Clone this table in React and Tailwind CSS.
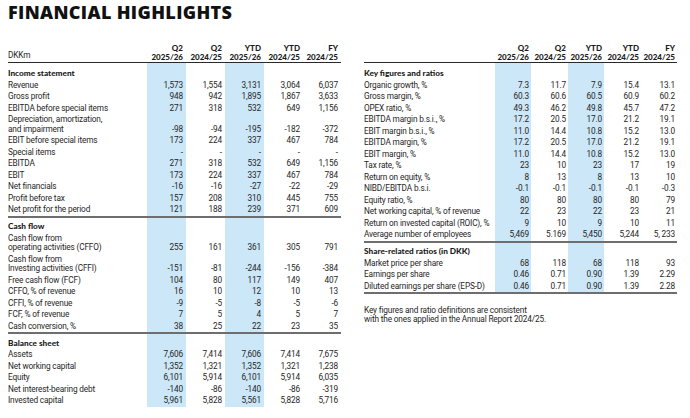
const heads = [["Q2", "2025/26"], ["Q2", "2024/25"], ["YTD", "2025/26"], ["YTD", "2024/25"], ["FY", "2024/25"]]

const leftCols = "grid grid-cols-[139px_39px_39px_39px_39px_38px]"
const rightCols = "grid grid-cols-[131px_36px_37px_36px_37px_36px]"

const leftSections = [
  {
    title: "Income statement",
    first: true,
    rows: [
      ["Revenue", ["1,573", "1,554", "3,131", "3,064", "6,037"]],
      ["Gross profit", ["948", "942", "1,895", "1,867", "3,633"]],
      ["EBITDA before special items", ["271", "318", "532", "649", "1,156"]],
      [["Depreciation, amortization,", "and impairment"], ["-98", "-94", "-195", "-182", "-372"]],
      ["EBIT before special items", ["173", "224", "337", "467", "784"]],
      ["Special items", ["-", "-", "-", "-", "-"]],
      ["EBITDA", ["271", "318", "532", "649", "1,156"]],
      ["EBIT", ["173", "224", "337", "467", "784"]],
      ["Net financials", ["-16", "-16", "-27", "-22", "-29"]],
      ["Profit before tax", ["157", "208", "310", "445", "755"]],
      ["Net profit for the period", ["121", "188", "239", "371", "609"]],
    ],
    line: true,
  },
  {
    title: "Cash flow",
    rows: [
      [["Cash flow from", "operating activities (CFFO)"], ["255", "161", "361", "305", "791"]],
      [["Cash flow from", "Investing activities (CFFI)"], ["-151", "-81", "-244", "-156", "-384"]],
      ["Free cash flow (FCF)", ["104", "80", "117", "149", "407"]],
      ["CFFO, % of revenue", ["16", "10", "12", "10", "13"]],
      ["CFFI, % of revenue", ["-9", "-5", "-8", "-5", "-6"]],
      ["FCF, % of revenue", ["7", "5", "4", "5", "7"]],
      ["Cash conversion, %", ["38", "25", "22", "23", "35"]],
    ],
    line: true,
  },
  {
    title: "Balance sheet",
    rows: [
      ["Assets", ["7,606", "7,414", "7,606", "7,414", "7,675"]],
      ["Net working capital", ["1,352", "1,321", "1,352", "1,321", "1,238"]],
      ["Equity", ["6,101", "5,914", "6,101", "5,914", "6,035"]],
      ["Net interest-bearing debt", ["-140", "-86", "-140", "-86", "-319"]],
      ["Invested capital", ["5,961", "5,828", "5,561", "5,828", "5,716"]],
    ],
  },
]

const rightSections = [
  {
    title: "Key figures and ratios",
    first: true,
    rows: [
      ["Organic growth, %", ["7.3", "11.7", "7.9", "15.4", "13.1"]],
      ["Gross margin, %", ["60.3", "60.6", "60.5", "60.9", "60.2"]],
      ["OPEX ratio, %", ["49.3", "46.2", "49.8", "45.7", "47.2"]],
      ["EBITDA margin b.s.i., %", ["17.2", "20.5", "17.0", "21.2", "19.1"]],
      ["EBIT margin b.s.i., %", ["11.0", "14.4", "10.8", "15.2", "13.0"]],
      ["EBITDA margin, %", ["17.2", "20.5", "17.0", "21.2", "19.1"]],
      ["EBIT margin, %", ["11.0", "14.4", "10.8", "15.2", "13.0"]],
      ["Tax rate, %", ["23", "10", "23", "17", "19"]],
      ["Return on equity, %", ["8", "13", "8", "13", "10"]],
      ["NIBD/EBITDA b.s.i.", ["-0.1", "-0.1", "-0.1", "-0.1", "-0.3"]],
      ["Equity ratio, %", ["80", "80", "80", "80", "79"]],
      ["Net working capital, % of revenue", ["22", "23", "22", "23", "21"]],
      ["Return on invested capital (ROIC), %", ["9", "10", "9", "10", "11"]],
      ["Average number of employees", ["5,469", "5.169", "5,450", "5,244", "5, 233"]],
    ],
    line: true,
  },
  {
    title: "Share-related ratios (in DKK)",
    rows: [
      ["Market price per share", ["68", "118", "68", "118", "93"]],
      ["Earnings per share", ["0.46", "0.71", "0.90", "1.39", "2.29"]],
      ["Diluted earnings per share (EPS-D)", ["0.46", "0.71", "0.90", "1.39", "2.28"]],
    ],
    line: true,
  },
]

function Head({ cols, pr, first }) {
  return (
    <div className={`${cols} border-b border-[#2a2a2a]`}>
      <div className="flex items-end pb-[2px] leading-[9px]">{first}</div>
      {heads.map(([a, b], i) => (
        <div key={i} className={`text-right font-[Lato,sans-serif] font-black text-[8px] leading-[9px] tracking-normal text-[#1a1a1a] ${pr}`}>
          <div>{a}</div>
          <div>{b}</div>
        </div>
      ))}
    </div>
  )
}

function Section({ cols, pr, section }) {
  return (
    <>
      <div className={cols}>
        <div className={`font-[Lato,sans-serif] font-black text-[8.25px] leading-[11.5px] tracking-normal text-[#1a1a1a] whitespace-nowrap ${section.first ? "pt-[5.25px]" : "pt-[3.5px]"}`}>
          {section.title}
        </div>
        {[0, 1, 2, 3, 4].map(i => (
          <div key={i} className={i === 0 || i === 2 ? "bg-[#cce7f8]" : ""} />
        ))}
      </div>
      {section.rows.map(([label, values], r) => {
        const isLast = section.line && r === section.rows.length - 1
        return (
          <div key={r} className={`${cols} ${isLast ? "border-b-2 border-[#6e6e6e]" : ""}`}>
            <div className="py-[1px] leading-[9.5px] whitespace-nowrap">
              {Array.isArray(label) ? label.map(l => <div key={l}>{l}</div>) : label}
            </div>
            {values.map((v, i) => (
              <div
                key={i}
                className={`flex items-end justify-end py-[1px] leading-[9.5px] whitespace-nowrap ${pr} ${i === 0 || i === 2 ? "bg-[#cce7f8]" : ""}`}
              >
                {v}
              </div>
            ))}
          </div>
        )
      })}
    </>
  )
}

export default function App() {
  return (
    <div className="w-[690px] h-[418px] bg-white text-[#262626] font-[Roboto,sans-serif] text-[8.25px] tracking-[-0.15px] pl-2 overflow-hidden">
      <h1 className="font-['Open_Sans',sans-serif] font-extrabold text-[18px] leading-[22px] pt-[1px] tracking-[0.35px] text-[#111]">
        FINANCIAL HIGHLIGHTS
      </h1>

      <div className="flex gap-[23px] mt-[21px]">
        {/* Left table */}
        <div className="w-[333px]">
          <Head cols={leftCols} pr="pr-[3px]" first="DKKm" />
          {leftSections.map(s => (
            <Section key={s.title} cols={leftCols} pr="pr-[3px]" section={s} />
          ))}
        </div>

        {/* Right table */}
        <div className="w-[313px]">
          <Head cols={rightCols} pr="pr-[2px]" first="" />
          {rightSections.map(s => (
            <Section key={s.title} cols={rightCols} pr="pr-[2px]" section={s} />
          ))}
          <p className="mt-[12px] leading-[9px]">
            Key figures and ratio definitions are consistent
            <br />
            with the ones applied in the Annual Report 2024/25.
          </p>
        </div>
      </div>
    </div>
  )
}
